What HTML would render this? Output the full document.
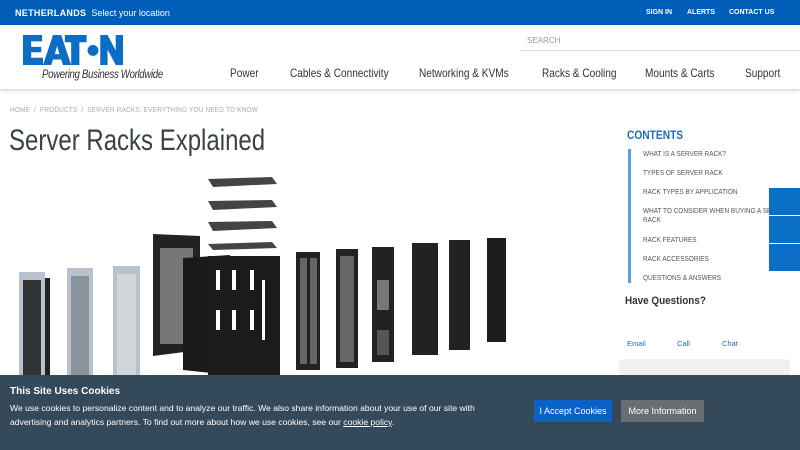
<!DOCTYPE html>
<html><head><meta charset="utf-8">
<style>
*{margin:0;padding:0;box-sizing:border-box}
body{width:800px;height:450px;overflow:hidden;background:#fff;font-family:"Liberation Sans",sans-serif;position:relative}
.top{position:absolute;left:0;top:0;width:800px;height:25px;background:#005eb8;color:#fff;font-size:9px}
.top .l{position:absolute;left:15px;top:8px}
.top b{font-weight:bold;letter-spacing:.3px}
.top .r{position:absolute;top:9px;font-size:7px;font-weight:bold}
.hdr{position:absolute;left:0;top:25px;width:800px;height:64px;background:#fff;box-shadow:0 2px 3px rgba(0,0,0,.15)}
.nav{position:absolute;top:66px;font-size:12px;color:#333;transform:scaleX(.84);transform-origin:0 0;white-space:nowrap}
.search{position:absolute;left:520px;top:11px;width:280px;height:15px;border-bottom:1px solid #ddd;font-size:8px;color:#999;padding-left:7px}
.bc{position:absolute;left:10px;top:105px;font-size:7.5px;color:#aaa;letter-spacing:.2px;transform:scaleX(.86);transform-origin:0 0;white-space:nowrap}
h1{position:absolute;left:9px;top:124px;font-size:30px;font-weight:normal;color:#3a4148;transform:scaleX(.8);transform-origin:0 0;white-space:nowrap}
.cont{position:absolute;left:627px;top:128px;font-size:12px;font-weight:bold;color:#1d6bc1;transform:scaleX(.85);transform-origin:0 0}
.bar{position:absolute;left:628px;top:149px;width:3px;height:134px;background:#5aa0e0}
.toc{position:absolute;left:643px;font-size:7px;color:#555;line-height:9px;transform:scaleX(.92);transform-origin:0 0}
.hq{position:absolute;left:625px;top:295px;font-size:11px;font-weight:bold;color:#333;transform:scaleX(.9);transform-origin:0 0}
.lk{position:absolute;top:339px;font-size:7.5px;color:#1d6bc1}
.box{position:absolute;left:619px;top:359px;width:171px;height:30px;background:#f0f0f0;border-radius:5px}
.tab{position:absolute;left:769px;width:31px;height:27px;background:#0a6dc6}
.ck{position:absolute;left:0;top:375px;width:800px;height:75px;background:#34495a;color:#fff}
.ck h4{position:absolute;left:10px;top:11px;font-size:10px}
.ck p{position:absolute;left:10px;top:26px;font-size:8.6px;line-height:14px;width:500px}
.btn{position:absolute;top:25px;height:22px;font-size:9px;line-height:22px;text-align:center;color:#fff}
</style></head><body>
<div class="top"><div class="l"><b>NETHERLANDS</b>&nbsp; Select your location</div>
<div class="r" style="left:646px">SIGN IN</div><div class="r" style="left:687px">ALERTS</div><div class="r" style="left:729px">CONTACT US</div></div>
<div class="hdr">
<svg style="position:absolute;left:19px;top:10px" width="108" height="30" viewBox="0 0 110 33">
<g fill="#0a6dc6">
<path d="M0 0h21v7h-12v6h11v6h-11v6h13v8H0z"/>
<path d="M22 33L33 0h9l11 33h-9l-2-6h-9l-2 6zM35 21h5l-2.5-9z"/>
<path d="M46 0h24v8h-8v25h-9V8h-7z"/>
<circle cx="77" cy="17" r="6"/>
<path d="M85 0h8l9 17V0h8v33h-8l-9-17v17h-8z"/>
</g></svg>
<div style="position:absolute;left:42px;top:44px;font-size:11.5px;font-style:italic;color:#333;letter-spacing:-.4px;transform:scaleX(.84);transform-origin:0 0;white-space:nowrap">Powering Business Worldwide</div>
<div class="search">SEARCH</div>
</div>
<div class="nav" style="left:230px">Power</div>
<div class="nav" style="left:290px">Cables &amp; Connectivity</div>
<div class="nav" style="left:419px">Networking &amp; KVMs</div>
<div class="nav" style="left:542px">Racks &amp; Cooling</div>
<div class="nav" style="left:645px">Mounts &amp; Carts</div>
<div class="nav" style="left:745px">Support</div>
<div class="bc">HOME &nbsp;/&nbsp; PRODUCTS &nbsp;/&nbsp; SERVER RACKS: EVERYTHING YOU NEED TO KNOW</div>
<h1>Server Racks Explained</h1>
<svg style="position:absolute;left:0;top:170px" width="530" height="210">
<g>
<rect x="19" y="102" width="26" height="105" fill="#b8c2cc"/><rect x="23" y="110" width="18" height="97" fill="#333"/><rect x="45" y="108" width="5" height="99" fill="#222"/>
<rect x="67" y="98" width="26" height="110" fill="#b8c2cc"/><rect x="71" y="106" width="18" height="102" fill="#8a939c"/>
<rect x="113" y="96" width="27" height="112" fill="#b8c2cc"/><rect x="117" y="104" width="19" height="104" fill="#d2d6da"/>
<polygon points="153,64 200,66 200,180 153,186" fill="#222"/><rect x="160" y="78" width="33" height="96" fill="#777"/>
<polygon points="183,88 230,85 230,205 183,200" fill="#1a1a1a"/>
<rect x="208" y="86" width="72" height="122" fill="#1b1b1b"/>
<g fill="#fff"><rect x="216" y="100" width="4" height="20"/><rect x="232" y="100" width="4" height="20"/><rect x="250" y="100" width="4" height="20"/><rect x="216" y="140" width="4" height="20"/><rect x="232" y="140" width="4" height="20"/><rect x="250" y="140" width="4" height="20"/><rect x="262" y="110" width="3" height="60"/></g>
<polygon points="208,9 272,7 277,14 213,17" fill="#444"/>
<polygon points="208,31 272,30 277,37 213,40" fill="#444"/>
<polygon points="208,52 272,51 277,58 213,61" fill="#444"/>
<polygon points="208,74 272,72 277,78 213,80" fill="#444"/>
<rect x="296" y="82" width="24" height="118" fill="#222"/><rect x="300" y="88" width="7" height="106" fill="#666"/><rect x="310" y="88" width="7" height="106" fill="#666"/>
<rect x="336" y="79" width="22" height="119" fill="#222"/><rect x="340" y="86" width="14" height="106" fill="#666"/>
<rect x="372" y="77" width="22" height="115" fill="#222"/><rect x="377" y="110" width="12" height="30" fill="#777"/><rect x="377" y="160" width="12" height="25" fill="#555"/>
<rect x="412" y="73" width="26" height="112" fill="#222"/>
<rect x="449" y="70" width="21" height="110" fill="#222"/>
<rect x="487" y="68" width="19" height="104" fill="#1c1c1c"/>
</g></svg>
<div class="cont">CONTENTS</div>
<div class="bar"></div>
<div class="toc" style="top:150px">WHAT IS A SERVER RACK?</div>
<div class="toc" style="top:169px">TYPES OF SERVER RACK</div>
<div class="toc" style="top:188px">RACK TYPES BY APPLICATION</div>
<div class="toc" style="top:207px;width:137px;white-space:nowrap;overflow:hidden">WHAT TO CONSIDER WHEN BUYING A SERVER<br>RACK</div>
<div class="toc" style="top:236px">RACK FEATURES</div>
<div class="toc" style="top:255px">RACK ACCESSORIES</div>
<div class="toc" style="top:274px">QUESTIONS &amp; ANSWERS</div>
<div class="hq">Have Questions?</div>
<div class="lk" style="left:627px">Email</div><div class="lk" style="left:677px">Call</div><div class="lk" style="left:722px">Chat</div>
<div class="box"></div>
<div class="tab" style="top:188px"></div><div class="tab" style="top:216px"></div><div class="tab" style="top:244px"></div>
<div class="ck"><h4>This Site Uses Cookies</h4>
<p>We use cookies to personalize content and to analyze our traffic. We also share information about your use of our site with advertising and analytics partners. To find out more about how we use cookies, see our <u>cookie policy</u>.</p>
<div class="btn" style="left:534px;width:78px;background:#0a62c4">I Accept Cookies</div>
<div class="btn" style="left:621px;width:83px;background:#6b6e71">More Information</div>
</div>
</body></html>
